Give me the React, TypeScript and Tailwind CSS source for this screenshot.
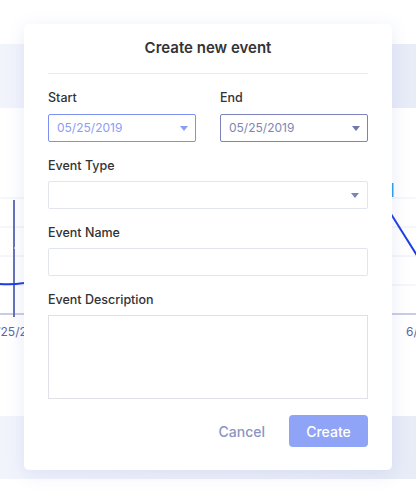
import React from 'react'

const font = { fontFamily: 'Inter, "Noto Sans", sans-serif' }

function Caret({ color }: { color: string }) {
  return (
    <svg width="8" height="5" viewBox="0 0 8 5" className="shrink-0">
      <path d="M0 0 L8 0 L4 5 Z" fill={color} />
    </svg>
  )
}

function ChartBehind() {
  return (
    <svg width="416" height="308" className="block">
      {/* grid */}
      {[90, 119, 148, 177].map((y) => (
        <line key={y} x1="0" x2="416" y1={y} y2={y} stroke="#eceef6" strokeWidth="1" />
      ))}
      <line x1="0" x2="416" y1="206" y2="206" stroke="#c9cde3" strokeWidth="2" />
      {/* hover marker */}
      <line x1="14" x2="14" y1="92" y2="209" stroke="#6472b6" strokeWidth="2" />
      <path d="M0 176 Q12 177 24 175" stroke="#1c3de6" strokeWidth="2" fill="none" />
      <path d="M20 134 L26 140 L20 146 L14 140 Z" fill="#ffffff" />
      {/* right series */}
      <line x1="392.5" x2="392.5" y1="75" y2="89" stroke="#2a9ff0" strokeWidth="2" />
      <path d="M391 106 L418 149" stroke="#1c3de6" strokeWidth="2" fill="none" />
      {/* axis labels */}
      <text x="14" y="228" fontSize="12" textAnchor="middle" fill="#5a66a8" fontFamily="Inter, sans-serif">
        05/25/2019
      </text>
      <text x="406" y="228" fontSize="12" fill="#5a66a8" fontFamily="Inter, sans-serif">
        6/01
      </text>
    </svg>
  )
}

export default function App() {
  return (
    <div className="relative w-[416px] h-[495px] bg-white overflow-hidden" style={font}>
      {/* page behind the modal */}
      <div className="h-[44px]" />
      <div className="bg-gradient-to-r from-[#f2f4fc] to-[#e8ecf7] pt-[64px] pb-[63px]">
        <div className="bg-white h-[308px]">
          <ChartBehind />
        </div>
      </div>

      {/* modal */}
      <div className="absolute left-[24px] top-[24px] w-[368px] h-[446px] bg-white rounded-[5px] shadow-[0_4px_18px_rgba(110,130,210,0.16)] px-[24px]">
        <h2 className="h-[50px] flex items-center justify-center text-[15px] font-semibold text-[#333] border-b border-[#ececec]">
          Create new event
        </h2>

        <div className="grid grid-cols-2 gap-x-[24px] mt-[15px]">
          <div>
            <label className="block text-[12.5px] font-medium text-[#333] leading-[18px]">Start</label>
            <div className="mt-[7px] h-[28px] border border-[#7d90f2] rounded-[2px] flex items-center justify-between pl-[8px] pr-[7px]">
              <span className="text-[12px] text-[#8c9df2]">05/25/2019</span>
              <Caret color="#8c9df2" />
            </div>
          </div>
          <div>
            <label className="block text-[12.5px] font-medium text-[#333] leading-[18px]">End</label>
            <div className="mt-[7px] h-[28px] border border-[#7b83ba] rounded-[2px] flex items-center justify-between pl-[8px] pr-[7px]">
              <span className="text-[12px] text-[#7e86b4]">05/25/2019</span>
              <Caret color="#6f77ad" />
            </div>
          </div>
        </div>

        <label className="block mt-[15px] text-[12.5px] font-medium text-[#333] leading-[18px]">Event Type</label>
        <div className="mt-[6px] h-[28px] border border-[#e3e5ed] rounded-[2px] flex items-center justify-end pr-[8px]">
          <Caret color="#7b83ba" />
        </div>

        <label className="block mt-[15px] text-[12.5px] font-medium text-[#333] leading-[18px]">Event Name</label>
        <div className="mt-[6px] h-[28px] border border-[#e3e5ed] rounded-[2px]" />

        <label className="block mt-[15px] text-[12.5px] font-medium text-[#333] leading-[18px]">Event Description</label>
        <div className="mt-[6px] h-[84px] border border-[#e0e1e6]" />

        <div className="flex justify-end items-center gap-[24px] mt-[16px]">
          <button className="text-[14px] font-medium text-[#8b94c2]">Cancel</button>
          <button className="w-[79px] h-[32px] rounded-[4px] bg-[#8fa4f6] text-white text-[14px] font-medium">
            Create
          </button>
        </div>
      </div>
    </div>
  )
}
